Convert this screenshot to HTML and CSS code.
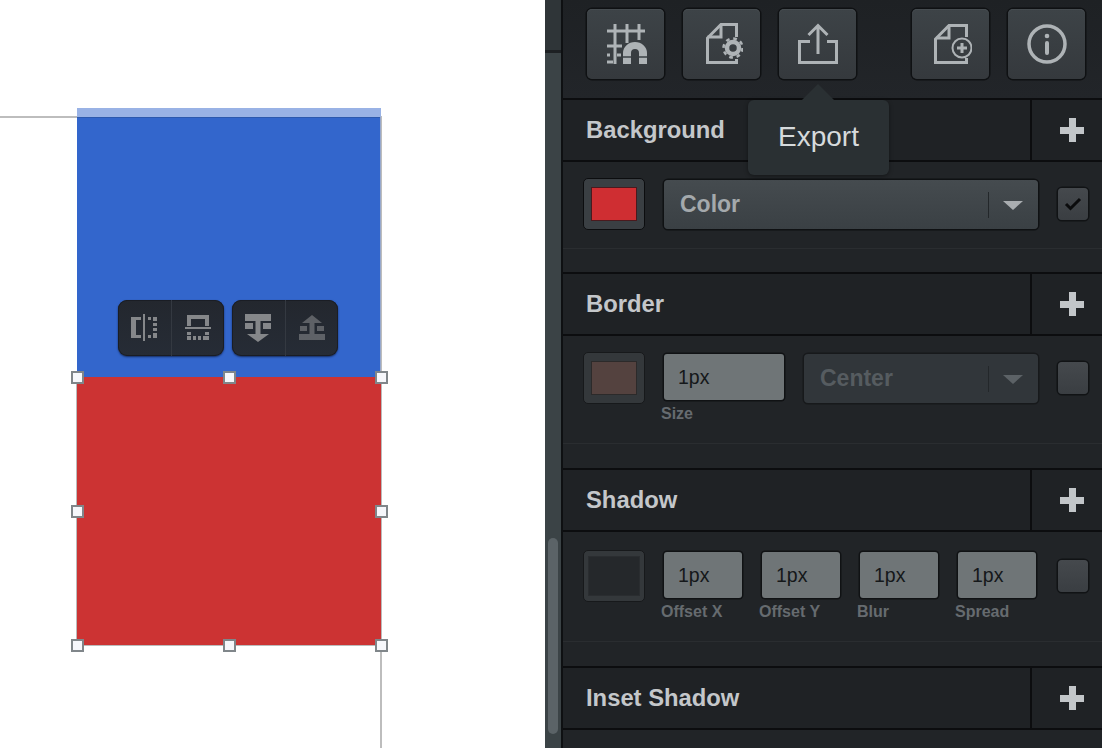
FILE: index.html
```html
<!DOCTYPE html>
<html lang="en">
<head>
    <meta charset="UTF-8">
    <title>Style panel</title>
    <link rel="stylesheet" href="styles.css">
</head>
<body>
    <div class="app">
        <div class="canvas">
            <div class="guide guide-h"></div>
            <div class="guide guide-v"></div>
            <div class="box-blue"></div>
            <div class="box-blue-top"></div>
            <div class="box-red"></div>
            <span class="handle h-tl"></span>
            <span class="handle h-tc"></span>
            <span class="handle h-tr"></span>
            <span class="handle h-ml"></span>
            <span class="handle h-mr"></span>
            <span class="handle h-bl"></span>
            <span class="handle h-bc"></span>
            <span class="handle h-br"></span>

            <div class="float-bar">
                <div class="float-group">
                    <div class="float-btn">
                        <svg width="28" height="28" viewBox="0 0 28 28" fill="#85878a">
                            <path d="M1 3h10v3H6v15h5v3H1z"/>
                            <path d="M13 0h2v27h-2z"/>
                            <path d="M18 3h3v3h-3zM23 3h4v4h-4zM23 9h4v3h-4zM23 14h4v3h-4zM23 19h4v5h-4zM18 21h3v3h-3z"/>
                        </svg>
                    </div>
                    <div class="float-btn">
                        <svg width="28" height="28" viewBox="0 0 28 28" fill="#85878a">
                            <path d="M3 12V1h22v11h-4V5H7v7z"/>
                            <path d="M1 13h26v2H1z"/>
                            <path d="M3 18h4v3H3zM21 18h4v3h-4zM3 22h4v4H3zM9 22h3v4H9zM14 22h3v4h-3zM19 22h6v4h-6z"/>
                        </svg>
                    </div>
                </div>
                <div class="float-group">
                    <div class="float-btn">
                        <svg width="28" height="28" viewBox="0 0 28 28" fill="#85878a">
                            <path d="M1 0h26v7H1z"/>
                            <path d="M11.500 7h5v13H25l-11 8-11-8h8.500z"/>
                            <path d="M1 9h8v6H1zM19 9h8v6h-8z"/>
                        </svg>
                    </div>
                    <div class="float-btn dim">
                        <svg width="28" height="28" viewBox="0 0 28 28" fill="#85878a">
                            <path d="M14 1l10 8h-7.500v12h-5V9H4z"/>
                            <path d="M1 20h26v6H1z"/>
                            <path d="M2 12h7v5H2zM19 12h7v5h-7z"/>
                        </svg>
                    </div>
                </div>
            </div>
        </div>

        <div class="scroll-track"><div class="scroll-thumb"></div></div>

        <div class="panel">
            <div class="toolbar">
                <div class="tool-btn">
                    <svg width="42" height="42" viewBox="0 0 42 42" fill="none" stroke="#aeb3b6" stroke-width="3">
                        <path d="M10 1v40M22 1v19M34 1v16M2 8h38M2 23h15M2 39h6"/>
                        <path d="M2 32h3M12 32h4"/>
                        <path d="M18 41V30a12 11 0 0 1 24 0v11h-8V30a4 4 0 0 0-8 0v11z" fill="#aeb3b6" stroke="none"/>
                        <path d="M18 34h8M34 34h8" stroke="#3b4145" stroke-width="1.500"/>
                    </svg>
                </div>
                <div class="tool-btn">
                    <svg width="42" height="42" viewBox="0 0 42 42" fill="none" stroke="#aeb3b6" stroke-width="3">
                        <path d="M35.500 14V1.500H20L6.500 15v24.500h29V36"/>
                        <path d="M20 1.500V14H6.500"/>
                        <circle cx="32" cy="25" r="6" stroke-width="4.500"/>
                        <circle cx="32" cy="25" r="9.500" stroke-width="2.500" stroke-dasharray="3.700 3.750"/>
                    </svg>
                </div>
                <div class="tool-btn">
                    <svg width="42" height="42" viewBox="0 0 42 42" fill="none" stroke="#aeb3b6" stroke-width="3">
                        <path d="M21 31V3M11.500 12L21 2.500l9.500 9.500"/>
                        <path d="M13 18.500H2.500v21h37v-21H30"/>
                    </svg>
                </div>
                <div class="tool-spacer"></div>
                <div class="tool-btn">
                    <svg width="42" height="42" viewBox="0 0 42 42" fill="none" stroke="#aeb3b6" stroke-width="3">
                        <path d="M36.500 14V2.500H19L5.500 16v23.500h31V35"/>
                        <path d="M19 2.500V15H6"/>
                        <circle cx="32" cy="25" r="9.500" stroke-width="2"/>
                        <path d="M32 20v10M27 25h10"/>
                    </svg>
                </div>
                <div class="tool-btn">
                    <svg width="42" height="42" viewBox="0 0 42 42" fill="none" stroke="#aeb3b6" stroke-width="3.500">
                        <circle cx="21" cy="21" r="18"/>
                        <circle cx="21" cy="13" r="2.300" fill="#aeb3b6" stroke="none"/>
                        <path d="M21 20v10" stroke-width="4" stroke-linecap="round"/>
                    </svg>
                </div>
            </div>

            <div class="section-head">
                <h2>Background</h2>
                <div class="add-btn"><span class="plus"></span></div>
            </div>
            <div class="section-body body-bg">
                <div class="row">
                    <div class="swatch"><span class="swatch-fill fill-red"></span></div>
                    <div class="select">
                        <span>Color</span>
                        <i class="sep"></i>
                        <i class="arrow"></i>
                    </div>
                    <div class="check">
                        <svg width="18" height="14" viewBox="0 0 18 14" fill="none" stroke="#0b0c0d" stroke-width="3"><path d="M2 7l4.500 4.500L16 2"/></svg>
                    </div>
                </div>
            </div>

            <div class="section-head">
                <h2>Border</h2>
                <div class="add-btn"><span class="plus"></span></div>
            </div>
            <div class="section-body body-fields">
                <div class="row">
                    <div class="swatch off"><span class="swatch-fill fill-brown"></span></div>
                    <div class="field size-field"><div class="input">1px</div><label>Size</label></div>
                    <div class="select off">
                        <span>Center</span>
                        <i class="sep"></i>
                        <i class="arrow"></i>
                    </div>
                    <div class="check"></div>
                </div>
            </div>

            <div class="section-head">
                <h2>Shadow</h2>
                <div class="add-btn"><span class="plus"></span></div>
            </div>
            <div class="section-body body-fields body-shadow">
                <div class="row">
                    <div class="swatch off"><span class="swatch-fill fill-dark"></span></div>
                    <div class="field"><div class="input">1px</div><label>Offset X</label></div>
                    <div class="field"><div class="input">1px</div><label>Offset Y</label></div>
                    <div class="field"><div class="input">1px</div><label>Blur</label></div>
                    <div class="field"><div class="input">1px</div><label>Spread</label></div>
                    <div class="check check-end"></div>
                </div>
            </div>

            <div class="section-head">
                <h2>Inset Shadow</h2>
                <div class="add-btn"><span class="plus"></span></div>
            </div>
            <div class="section-body"></div>

            <div class="tooltip">Export</div>
        </div>
    </div>
</body>
</html>
```

FILE: styles.css
```css
* {
    box-sizing: border-box;
}
html, body {
    margin: 0;
    height: 100%;
    overflow: hidden;
}
body {
    font-family: "Liberation Sans", Arial, sans-serif;
    background: #fff;
}
.app {
    display: flex;
    height: 748px;
}

/* canvas */
.canvas {
    position: relative;
    flex: none;
    width: 545px;
    background: #fff;
    overflow: hidden;
}
.guide {
    position: absolute;
    background: #bdbdbd;
}
.guide-h {
    left: 0;
    top: 116px;
    width: 381px;
    height: 2px;
}
.guide-v {
    left: 380px;
    top: 116px;
    width: 2px;
    height: 632px;
}
.box-blue {
    position: absolute;
    left: 77px;
    top: 117px;
    width: 304px;
    height: 260px;
    background: #3366cc;
    box-shadow: inset -1px 0 0 #98a9cc, inset 0 1px 0 #2c58ad;
}
.box-blue-top {
    position: absolute;
    left: 77px;
    top: 108px;
    width: 304px;
    height: 9px;
    background: #99b2e5;
}
.box-red {
    position: absolute;
    left: 77px;
    top: 377px;
    width: 304px;
    height: 268px;
    background: #cc3333;
    box-shadow: 0 1px 0 #bbb, 1px 0 0 #bbb, -1px 0 0 #bbb;
}
.handle {
    position: absolute;
    width: 13px;
    height: 13px;
    background: #f6f7fb;
    border: 2px solid #80868a;
    margin: -6px 0 0 -6px;
}
.h-tl { left: 77px; top: 377px; }
.h-tc { left: 229px; top: 377px; }
.h-tr { left: 381px; top: 377px; }
.h-ml { left: 77px; top: 511px; }
.h-mr { left: 381px; top: 511px; }
.h-bl { left: 77px; top: 645px; }
.h-bc { left: 229px; top: 645px; }
.h-br { left: 381px; top: 645px; }

.float-bar {
    position: absolute;
    left: 118px;
    top: 300px;
    display: flex;
    gap: 8px;
}
.float-group {
    display: flex;
    width: 106px;
    height: 56px;
    background: linear-gradient(#23272e, #262c36);
    border-radius: 9px;
    box-shadow: inset 0 0 0 1px #1a1d24, 0 1px 2px rgba(10, 20, 50, 0.7);
}
.float-btn {
    flex: 1;
    display: flex;
    align-items: center;
    justify-content: center;
}
.float-btn + .float-btn {
    border-left: 1px solid #343941;
}
.float-btn.dim svg {
    opacity: 0.6;
}

/* scrollbar between canvas and panel */
.scroll-track {
    flex: none;
    width: 16px;
    padding: 0 3px;
    background: linear-gradient(#2f3538 50px, #1d2023 50px, #1d2023 53px, #3b4346 53px);
}
.scroll-thumb {
    margin-top: 538px;
    height: 196px;
    width: 10px;
    background: #5b6367;
    border-radius: 5px;
}

/* panel */
.panel {
    position: relative;
    flex: 1;
    height: 748px;
    background: #212427;
    border-left: 2px solid #0e1012;
    overflow: hidden;
}
.toolbar {
    display: flex;
    gap: 19px;
    height: 100px;
    padding: 9px 0 0 24px;
    border-bottom: 2px solid #0c0d0f;
    background: linear-gradient(#1e2124, #222529);
}
.tool-spacer {
    flex: none;
    width: 18px;
}
.tool-btn {
    display: flex;
    flex: none;
    align-items: center;
    justify-content: center;
    width: 77px;
    height: 70px;
    border-radius: 5px;
    background: linear-gradient(#3d4347, #35393d);
    box-shadow: 0 0 0 1.5px #0f1113, inset 0 1px 0 #464c50;
}
.section-head {
    display: flex;
    justify-content: space-between;
    height: 62px;
    border-bottom: 2px solid #0c0d0f;
    background: #1f2225;
}
.section-head h2 {
    margin: 0;
    padding: 15px 0 0 23px;
    font-size: 23.8px;
    line-height: 30px;
    font-weight: bold;
    color: #c4c7ca;
}
.add-btn {
    position: relative;
    width: 72px;
    border-left: 2px solid #0c0d0f;
}
.plus {
    position: absolute;
    left: 28px;
    top: 18px;
    width: 24px;
    height: 24px;
    background:
        linear-gradient(#c2c6c9, #c2c6c9) center / 24px 7px no-repeat,
        linear-gradient(#c2c6c9, #c2c6c9) center / 7px 24px no-repeat;
}
.section-body {
    height: 112px;
    border-bottom: 2px solid #0c0d0f;
    background: linear-gradient(#212427 86px, #2a2d30 86px, #2a2d30 87px, #212427 87px);
    padding: 16px 13px 0 20px;
}
.section-body:last-of-type {
    border-bottom: 0;
}
.body-fields {
    height: 134px;
    background: linear-gradient(#212427 107px, #2a2d30 107px, #2a2d30 108px, #212427 108px);
}
.body-shadow {
    height: 136px;
    padding-top: 18px;
    background: linear-gradient(#212427 109px, #2a2d30 109px, #2a2d30 110px, #212427 110px);
}
.row {
    display: flex;
    align-items: flex-start;
    gap: 18px;
}
.swatch {
    display: flex;
    align-items: center;
    justify-content: center;
    flex: none;
    width: 62px;
    height: 52px;
    border: 1.5px solid #0c0d0f;
    border-radius: 5px;
    background: #3a3f43;
}
.swatch.off {
    background: #34383b;
    border-color: #17191b;
}
.swatch-fill {
    width: 44px;
    height: 32px;
}
.fill-red {
    background: #cf2e32;
    box-shadow: 0 0 0 1px #4a1a1e;
}
.fill-brown {
    background: #54423f;
    box-shadow: 0 0 0 1px #2c2a2a;
}
.swatch-fill.fill-dark {
    width: 50px;
    height: 38px;
    background: #25282b;
    box-shadow: 0 0 0 1px #2a2d30;
}
.select {
    position: relative;
    flex: 1;
    height: 49px;
    margin: 2px 1px 0;
    display: flex;
    align-items: center;
    padding-left: 16px;
    border-radius: 4px;
    background: linear-gradient(#454b4f, #3a4044);
    box-shadow: 0 0 0 1.5px #0f1113;
    font-size: 23px;
    font-weight: bold;
    color: #a4a9ac;
}
.select.off {
    background: #31363a;
    box-shadow: 0 0 0 1.5px #17191b;
    color: #565c60;
}
.select .sep {
    position: absolute;
    right: 49px;
    top: 12px;
    width: 1px;
    height: 26px;
    background: #23272a;
}
.select .arrow {
    position: absolute;
    right: 15px;
    top: 21px;
    border-style: solid;
    border-width: 9px 10px 0;
    border-color: #a9adb0 transparent transparent;
}
.select.off .arrow {
    border-top-color: #5c6266;
}
.check {
    display: flex;
    align-items: center;
    justify-content: center;
    flex: none;
    width: 30px;
    height: 32px;
    margin: 10px 1px 0;
    border-radius: 4px;
    background: linear-gradient(#45494d, #3a3e42);
    box-shadow: 0 0 0 1.5px #111315;
}
.check-end {
    margin-left: 3px;
}
.field {
    flex: none;
    width: 80px;
}
.size-field {
    width: 122px;
}
.input {
    height: 46px;
    margin: 2px 1px 0;
    padding: 11px 0 0 14px;
    border-radius: 3px;
    background: #6f7577;
    box-shadow: 0 0 0 1.5px #101214;
    font-size: 19.5px;
    line-height: 24px;
    color: #15181a;
}
.field label {
    display: block;
    margin: 4px 0 0 -2px;
    font-size: 16px;
    line-height: 20px;
    font-weight: bold;
    color: #666b6f;
}
.tooltip {
    position: absolute;
    left: 185px;
    top: 100px;
    width: 141px;
    height: 75px;
    padding-top: 19px;
    border-radius: 6px;
    background: #2a3033;
    box-shadow: 0 1px 4px rgba(0, 0, 0, 0.4);
    text-align: center;
    font-size: 28px;
    line-height: 36px;
    color: #d6dadc;
}
.tooltip::before {
    content: "";
    position: absolute;
    left: 54px;
    top: -16px;
    border-style: solid;
    border-width: 0 16px 16px;
    border-color: transparent transparent #2a3033;
}
```
